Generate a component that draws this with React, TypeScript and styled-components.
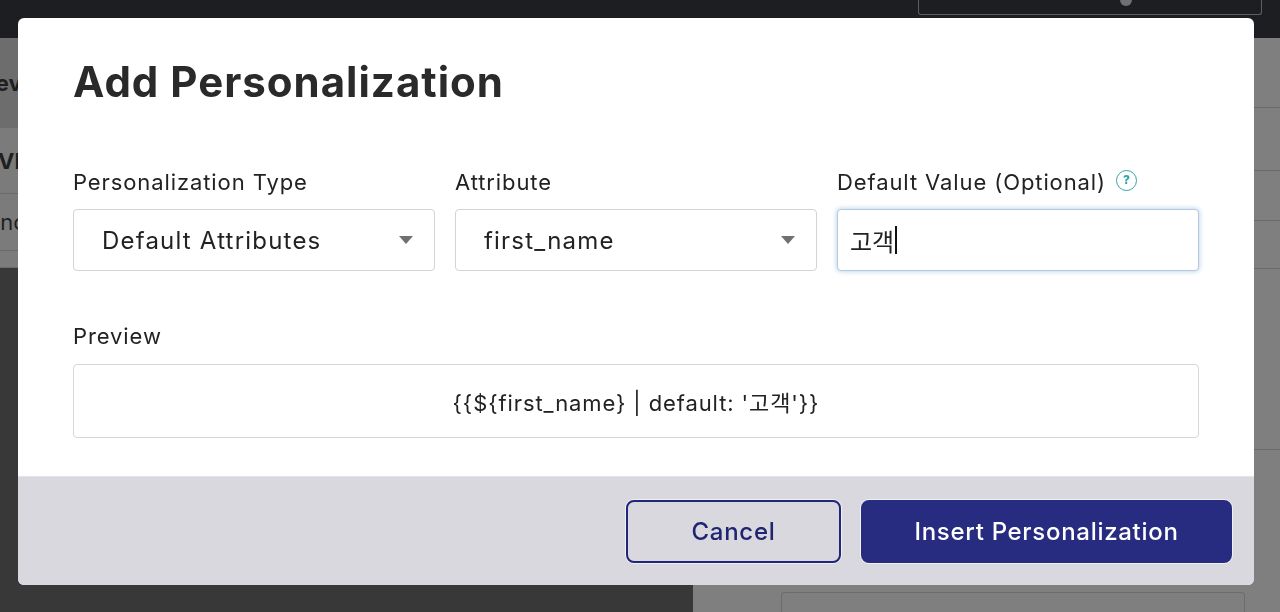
import styled, { createGlobalStyle } from 'styled-components'

const GlobalStyle = createGlobalStyle`
  html, body {
    margin: 0;
    padding: 0;
    width: 1280px;
    height: 612px;
    overflow: hidden;
    font-family: Inter, "Noto Sans", "Noto Sans CJK KR", sans-serif;
  }
`

const Page = styled.div`
  width: 1280px;
  height: 612px;
  display: flex;
  flex-direction: column;
  background: #383838;
`

const TopBar = styled.div`
  height: 38px;
  flex: none;
  background: #1c1e21;
  display: flex;
  justify-content: flex-end;
  padding-right: 18px;
`

const TopSearch = styled.div`
  width: 342px;
  height: 14px;
  border: 1px solid #5c5e62;
  border-top: none;
  border-radius: 0 0 3px 3px;
  display: flex;
  justify-content: center;
  align-items: flex-end;
`

const TopDot = styled.span`
  width: 12px;
  height: 6px;
  margin-bottom: 8px;
  margin-left: 72px;
  border-radius: 0 0 6px 6px;
  background: #6f7074;
`

const Main = styled.div`
  flex: 1;
  display: flex;
`

const LeftPane = styled.div`
  width: 693px;
  flex: none;
  display: flex;
  flex-direction: column;
  background: #383838;
  overflow: hidden;
`

const LeftHeader = styled.div`
  height: 90px;
  background: #6d6d6d;
  display: flex;
  align-items: center;
  font-weight: 700;
  font-size: 22px;
  color: #1f1f1f;
  text-indent: -27px;
  white-space: nowrap;
`

const LeftRow = styled.div<{ $h: number; $bold?: boolean; $shift: number }>`
  height: ${(p) => p.$h}px;
  background: #7b7b7b;
  border-bottom: 1px solid #6a6a6a;
  display: flex;
  align-items: center;
  font-size: 22px;
  font-weight: ${(p) => (p.$bold ? 700 : 400)};
  color: #1f1f1f;
  text-indent: ${(p) => p.$shift}px;
  white-space: nowrap;
`

const RightPane = styled.div`
  flex: 1;
  background: #7f7f7f;
  display: flex;
  flex-direction: column;
`

const RightLine = styled.div<{ $h: number }>`
  height: ${(p) => p.$h}px;
  flex: none;
  border-bottom: 1px solid #6b6b6b;
`

const RightBottom = styled.div`
  flex: 1;
  display: flex;
  flex-direction: column;
  align-items: flex-end;
  padding-top: 104px;
`

const BuLabel = styled.div`
  width: 20px;
  overflow: hidden;
  font-weight: 800;
  font-size: 20px;
  color: #222;
  white-space: nowrap;
`

const BottomBoxes = styled.div`
  display: flex;
  gap: 18px;
  margin-top: 14px;
  width: 100%;
  padding-left: 50px;
  box-sizing: border-box;
`

const BottomBox = styled.div<{ $w: number }>`
  width: ${(p) => p.$w}px;
  height: 20px;
  border: 1px solid #6c6c6c;
  border-bottom: none;
  border-radius: 4px 4px 0 0;
  margin-left: 38px;
`

const Overlay = styled.div`
  position: fixed;
  inset: 0;
  padding: 18px 0 0 18px;
`

const Dialog = styled.div`
  width: 1236px;
  background: #fff;
  border-radius: 6px;
  overflow: hidden;
  color: #222;
`

const Body = styled.div`
  padding: 40px 55px 38px;
`

const Title = styled.h1`
  margin: 0;
  font-size: 42px;
  line-height: 48px;
  font-weight: 700;
  letter-spacing: 1px;
  color: #2a2a2a;
`

const FieldRow = styled.div`
  display: grid;
  grid-template-columns: repeat(3, 1fr);
  gap: 20px;
  margin-top: 62px;
`

const Field = styled.div`
  display: flex;
  flex-direction: column;
  gap: 13px;
`

const Label = styled.div`
  font-size: 22px;
  line-height: 28px;
  letter-spacing: 0.9px;
  color: #222;
  display: flex;
  align-items: center;
  gap: 10px;
`

const HelpIcon = styled.span`
  width: 21px;
  height: 21px;
  border: 1.5px solid #36a3a6;
  border-radius: 50%;
  color: #36a3a6;
  font-size: 12px;
  font-weight: 800;
  letter-spacing: 0;
  line-height: 1;
  display: inline-flex;
  align-items: center;
  justify-content: center;
  margin-top: -4px;
  box-sizing: border-box;
`

const Box = styled.div<{ $focus?: boolean }>`
  height: 62px;
  box-sizing: border-box;
  border: 1px solid ${(p) => (p.$focus ? '#b3c9df' : '#d3d3d8')};
  box-shadow: ${(p) => (p.$focus ? '0 0 4px 1px rgba(150, 185, 215, 0.55)' : 'none')};
  border-radius: 4px;
  display: flex;
  align-items: center;
  justify-content: space-between;
  padding: 0 21px 0 ${(p) => (p.$focus ? 12 : 28)}px;
  font-size: 24px;
  letter-spacing: 1.2px;
  color: #222;
  background: #fff;
`

const Arrow = styled.span`
  width: 0;
  height: 0;
  border-left: 7px solid transparent;
  border-right: 7px solid transparent;
  border-top: 8px solid #707070;
`

const Typed = styled.span`
  display: inline-flex;
  align-items: center;
  font-family: "Noto Sans CJK KR", sans-serif;
  font-size: 24px;
  letter-spacing: 0;
`

const Caret = styled.span`
  width: 1.5px;
  height: 28px;
  background: #111;
  margin-left: 1px;
`

const PreviewBlock = styled.div`
  display: flex;
  flex-direction: column;
  gap: 14px;
  margin-top: 51px;
`

const PreviewBox = styled.div`
  height: 74px;
  box-sizing: border-box;
  border: 1px solid #d6d6dc;
  border-radius: 4px;
  display: flex;
  align-items: center;
  justify-content: center;
  font-size: 22px;
  letter-spacing: 0.9px;
  color: #222;
  font-family: Inter, "Noto Sans CJK KR", sans-serif;
`

const Footer = styled.div`
  background: #d9d8de;
  border-top: 1px solid #e4e4e8;
  padding: 23px 22px 22px;
  display: flex;
  justify-content: flex-end;
  gap: 20px;
`

const Button = styled.button<{ $primary?: boolean }>`
  height: 63px;
  box-sizing: border-box;
  border-radius: 8px;
  border: 2px solid ${(p) => (p.$primary ? '#282c80' : '#20267a')};
  background: ${(p) => (p.$primary ? '#282c80' : 'transparent')};
  color: ${(p) => (p.$primary ? '#fff' : '#1f2570')};
  box-shadow: 0 0 0 1px #f1f1f4;
  font-family: Inter, sans-serif;
  font-size: 24px;
  font-weight: 500;
  letter-spacing: 0.7px;
  padding: 0;
  width: ${(p) => (p.$primary ? 371 : 215)}px;
  cursor: pointer;
`

export default function App() {
  return (
    <>
      <GlobalStyle />
      <Page>
        <TopBar>
          <TopSearch>
            <TopDot />
          </TopSearch>
        </TopBar>
        <Main>
          <LeftPane>
            <LeftHeader>Preview</LeftHeader>
            <LeftRow $h={65} $bold $shift={-2}>
              VIEW
            </LeftRow>
            <LeftRow $h={56} $shift={-53}>
              Advanced
            </LeftRow>
            <LeftRow $h={16} $shift={0} />
          </LeftPane>
          <RightPane>
            <RightLine $h={69} />
            <RightLine $h={62} />
            <RightLine $h={49} />
            <RightLine $h={47} />
            <RightLine $h={180} />
            <RightBottom>
              <BuLabel>BUTTON</BuLabel>
            </RightBottom>
            <BottomBoxes>
              <BottomBox $w={462} />
              <BottomBox $w={20} />
            </BottomBoxes>
          </RightPane>
        </Main>
      </Page>

      <Overlay>
        <Dialog>
          <Body>
            <Title>Add Personalization</Title>
            <FieldRow>
              <Field>
                <Label>Personalization Type</Label>
                <Box>
                  Default Attributes
                  <Arrow />
                </Box>
              </Field>
              <Field>
                <Label>Attribute</Label>
                <Box>
                  first_name
                  <Arrow />
                </Box>
              </Field>
              <Field>
                <Label>
                  Default Value (Optional)
                  <HelpIcon>?</HelpIcon>
                </Label>
                <Box $focus>
                  <Typed>
                    고객
                    <Caret />
                  </Typed>
                </Box>
              </Field>
            </FieldRow>
            <PreviewBlock>
              <Label>Preview</Label>
              <PreviewBox>{"{{${first_name} | default: '고객'}}"}</PreviewBox>
            </PreviewBlock>
          </Body>
          <Footer>
            <Button>Cancel</Button>
            <Button $primary>Insert Personalization</Button>
          </Footer>
        </Dialog>
      </Overlay>
    </>
  )
}
